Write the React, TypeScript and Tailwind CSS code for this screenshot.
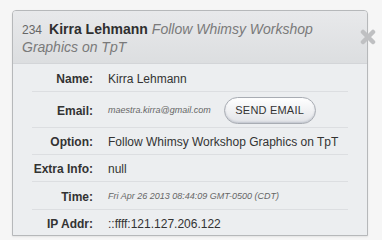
type Row = {
  label: string
  value: string
  kind?: 'small' | 'email'
  height: string
}

const rows: Row[] = [
  { label: 'Name:', value: 'Kirra Lehmann', height: 'h-[27px]' },
  { label: 'Email:', value: 'maestra.kirra@gmail.com', kind: 'email', height: 'h-[36px]' },
  { label: 'Option:', value: 'Follow Whimsy Workshop Graphics on TpT', height: 'h-[27px]' },
  { label: 'Extra Info:', value: 'null', height: 'h-[27px]' },
  { label: 'Time:', value: 'Fri Apr 26 2013 08:44:09 GMT-0500 (CDT)', kind: 'small', height: 'h-[28px]' },
  { label: 'IP Addr:', value: '::ffff:121.127.206.122', height: 'h-[26px]' },
]

function CloseIcon() {
  return (
    <svg width="16" height="16" viewBox="0 0 16 16" className="block">
      <path
        d="M3 3 L13 13 M13 3 L3 13"
        stroke="#bfc0c2"
        strokeWidth="4.5"
        strokeLinecap="round"
      />
    </svg>
  )
}

export default function App() {
  return (
    <div className="w-[382px] h-[240px] bg-[#f6f6f6] pt-[10px] pl-[12px] font-['Liberation_Sans',Arial,sans-serif]">
      <div className="relative w-[356px] h-[226px] rounded-t-[4px] border border-[#b6b8ba] bg-[#eceef0] shadow-[0_1px_2px_rgba(0,0,0,0.08)]">
        <div className="h-[53px] rounded-t-[3px] border-b border-[#d3d5d8] bg-gradient-to-b from-[#e8e9eb] to-[#dcdee0] pl-[9px] pr-[30px] pt-[10px] text-[14px] leading-[17px]">
          <div>
            <span className="mr-[7px] text-[12px] text-[#666]">234</span>
            <span className="mr-[4px] font-bold text-[#2f2f2f]">Kirra Lehmann</span>
            <span className="italic text-[#7a7a7a]">Follow Whimsy Workshop</span>
          </div>
          <div className="italic text-[#7a7a7a]">Graphics on TpT</div>
        </div>
        <div className="absolute right-[-9px] top-[18px]">
          <CloseIcon />
        </div>
        <div className="px-[19px]">
          {rows.map((r, i) => (
            <div
              key={r.label}
              className={`flex items-center ${r.height} ${i > 0 ? 'border-t border-[#dcdee1]' : ''}`}
            >
              <div className="w-[61px] shrink-0 text-right text-[12px] font-bold text-[#333] pt-[2px]">
                {r.label}
              </div>
              <div className="pl-[15px] pt-[2px] flex items-center">
                {r.kind === 'email' ? (
                  <>
                    <span className="text-[9px] italic text-[#666]">{r.value}</span>
                    <button className="ml-[13px] h-[27px] w-[92px] rounded-full border border-[#a8acb3] bg-gradient-to-b from-white to-[#e2e4e8] text-[11px] text-[#333] tracking-[0.2px] shadow-[inset_0_-1px_2px_rgba(120,130,150,0.35)]">
                      SEND EMAIL
                    </button>
                  </>
                ) : r.kind === 'small' ? (
                  <span className="text-[9px] italic text-[#666]">{r.value}</span>
                ) : (
                  <span className="text-[12px] text-[#333]">{r.value}</span>
                )}
              </div>
            </div>
          ))}
        </div>
      </div>
    </div>
  )
}
